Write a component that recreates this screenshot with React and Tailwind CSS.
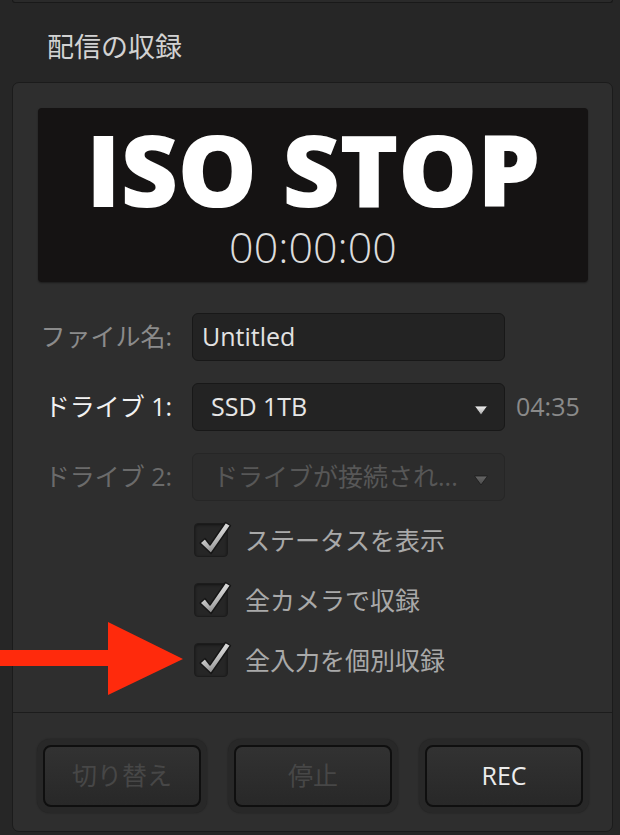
const font = { fontFamily: '"Open Sans", "Noto Sans CJK JP", sans-serif' };

const Caret = ({ dim }) => (
  <svg width="16" height="11" viewBox="0 0 16 11" className="shrink-0 mt-[6px]">
    <defs>
      <linearGradient id={dim ? "cd" : "cb"} x1="0" y1="0" x2="0" y2="1">
        <stop offset="0" stopColor={dim ? "#666" : "#f0f0f0"} />
        <stop offset="1" stopColor={dim ? "#4a4a4a" : "#a8a8a8"} />
      </linearGradient>
    </defs>
    <path
      d="M1.5 1 L14.5 1 L8 10 Z"
      fill={`url(#${dim ? "cd" : "cb"})`}
      stroke="#1a1a1a"
      strokeWidth="0.8"
      strokeLinejoin="round"
    />
  </svg>
);

const Check = () => (
  <svg
    width="40"
    height="40"
    viewBox="0 0 40 40"
    className="absolute left-0 top-[-4px] overflow-visible"
  >
    <defs>
      <linearGradient id="ck" x1="0" y1="0" x2="0.4" y2="1">
        <stop offset="0" stopColor="#f2f2f2" />
        <stop offset="0.55" stopColor="#c8c8c8" />
        <stop offset="1" stopColor="#8c8c8c" />
      </linearGradient>
    </defs>
    <path
      d="M5 23 L10 18.5 L15 25 L30.5 2.5 L35.5 5.5 L16 33.5 Z"
      fill="url(#ck)"
      stroke="#151515"
      strokeWidth="1.4"
      strokeLinejoin="round"
    />
  </svg>
);

const CheckRow = ({ label }) => (
  <div className="flex items-center h-[34px] pl-[181px]">
    <div className="relative w-[34px] h-[34px] rounded-[4px] bg-[#262626] border border-[#1c1c1c] shadow-[inset_0_1px_3px_rgba(0,0,0,0.5)]">
      <Check />
    </div>
    <span className="ml-[17px] text-[25px] text-[#a9a9a9] leading-none">{label}</span>
  </div>
);

const Btn = ({ children, on }) => (
  <div className="rounded-[13px] bg-[#282828] p-[6px] shadow-[0_0_2px_rgba(0,0,0,0.35)]">
    <div
      className={`w-[158px] h-[62px] rounded-[8px] border-2 border-[#0f0f0f] bg-gradient-to-b from-[#323232] to-[#282828] flex items-center justify-center text-[25px] ${
        on ? "text-[#ececec]" : "text-[#474747]"
      }`}
    >
      {children}
    </div>
  </div>
);

export default function App() {
  return (
    <div className="relative w-[620px] h-[835px] bg-[#262626] overflow-hidden" style={font}>
      {/* bottom edge of the panel above */}
      <div className="ml-[12px] mr-[7px] h-[3px] bg-[#2a2a2a] border-x border-b border-[#191919] rounded-b-[5px]" />

      <div className="h-[79px] pt-[10px] pl-[47px] flex items-center">
        <span className="text-[27px] text-[#d2d2d2]">配信の収録</span>
      </div>

      <div className="ml-[12px] mr-[7px] rounded-[7px] border border-[#1b1b1b] bg-[#2e2e2e]">
        {/* status display */}
        <div className="ml-[25px] mt-[25px] w-[550px] h-[174px] rounded-[4px] bg-[#151313] shadow-[0_1px_2px_rgba(0,0,0,0.4)] flex flex-col items-center pt-[10px]">
          <div className="h-[100px] text-[100px] leading-none font-extrabold text-white tracking-[-0.5px]">ISO STOP</div>
          <div className="mt-[7px] text-[43px] leading-none font-light text-[#dcdcdc]">00:00:00</div>
        </div>

        {/* form */}
        <div className="mt-[31px] flex flex-col gap-[22px]">
          <div className="flex items-center">
            <span className="w-[159px] text-right text-[25px] text-[#8b8b8b]">ファイル名:</span>
            <div className="ml-[20px] w-[313px] h-[48px] rounded-[6px] bg-[#232323] border border-[#181818] flex items-center pl-[9px] text-[25px] text-[#e2e2e2]">
              Untitled
            </div>
          </div>
          <div className="flex items-center">
            <span className="w-[159px] text-right text-[25px] text-[#f2f2f2]">ドライブ 1:</span>
            <div className="ml-[20px] w-[313px] h-[48px] rounded-[6px] bg-[#232323] border border-[#181818] flex items-center pl-[18px] pr-[15px] text-[25px] text-[#e6e6e6]">
              <span className="flex-1">SSD 1TB</span>
              <Caret />
            </div>
            <span className="ml-[11px] text-[25px] font-medium text-[#8a8a8a]">04:35</span>
          </div>
          <div className="flex items-center">
            <span className="w-[159px] text-right text-[25px] text-[#6b6b6b]">ドライブ 2:</span>
            <div className="ml-[20px] w-[313px] h-[48px] rounded-[6px] bg-[#2c2c2c] border border-[#262626] flex items-center pl-[20px] pr-[15px] text-[25px] text-[#575757]">
              <span className="flex-1 whitespace-nowrap">ドライブが接続され...</span>
              <Caret dim />
            </div>
          </div>
        </div>

        {/* options */}
        <div className="mt-[22px] flex flex-col gap-[26px]">
          <CheckRow label="ステータスを表示" />
          <CheckRow label="全カメラで収録" />
          <CheckRow label="全入力を個別収録" />
        </div>

        {/* buttons */}
        <div className="mt-[35px] border-t border-[#1c1c1c] pt-[26px] pb-[18px] pl-[24px] flex gap-[21px]">
          <Btn>切り替え</Btn>
          <Btn>停止</Btn>
          <Btn on>REC</Btn>
        </div>
      </div>

      {/* annotation arrow */}
      <svg width="190" height="80" viewBox="0 0 190 80" className="absolute left-0 top-[619px]">
        <path d="M0 31 L108 31 L108 3 L183 40 L108 76 L108 47 L0 47 Z" fill="#ff2a0c" />
      </svg>
    </div>
  );
}
